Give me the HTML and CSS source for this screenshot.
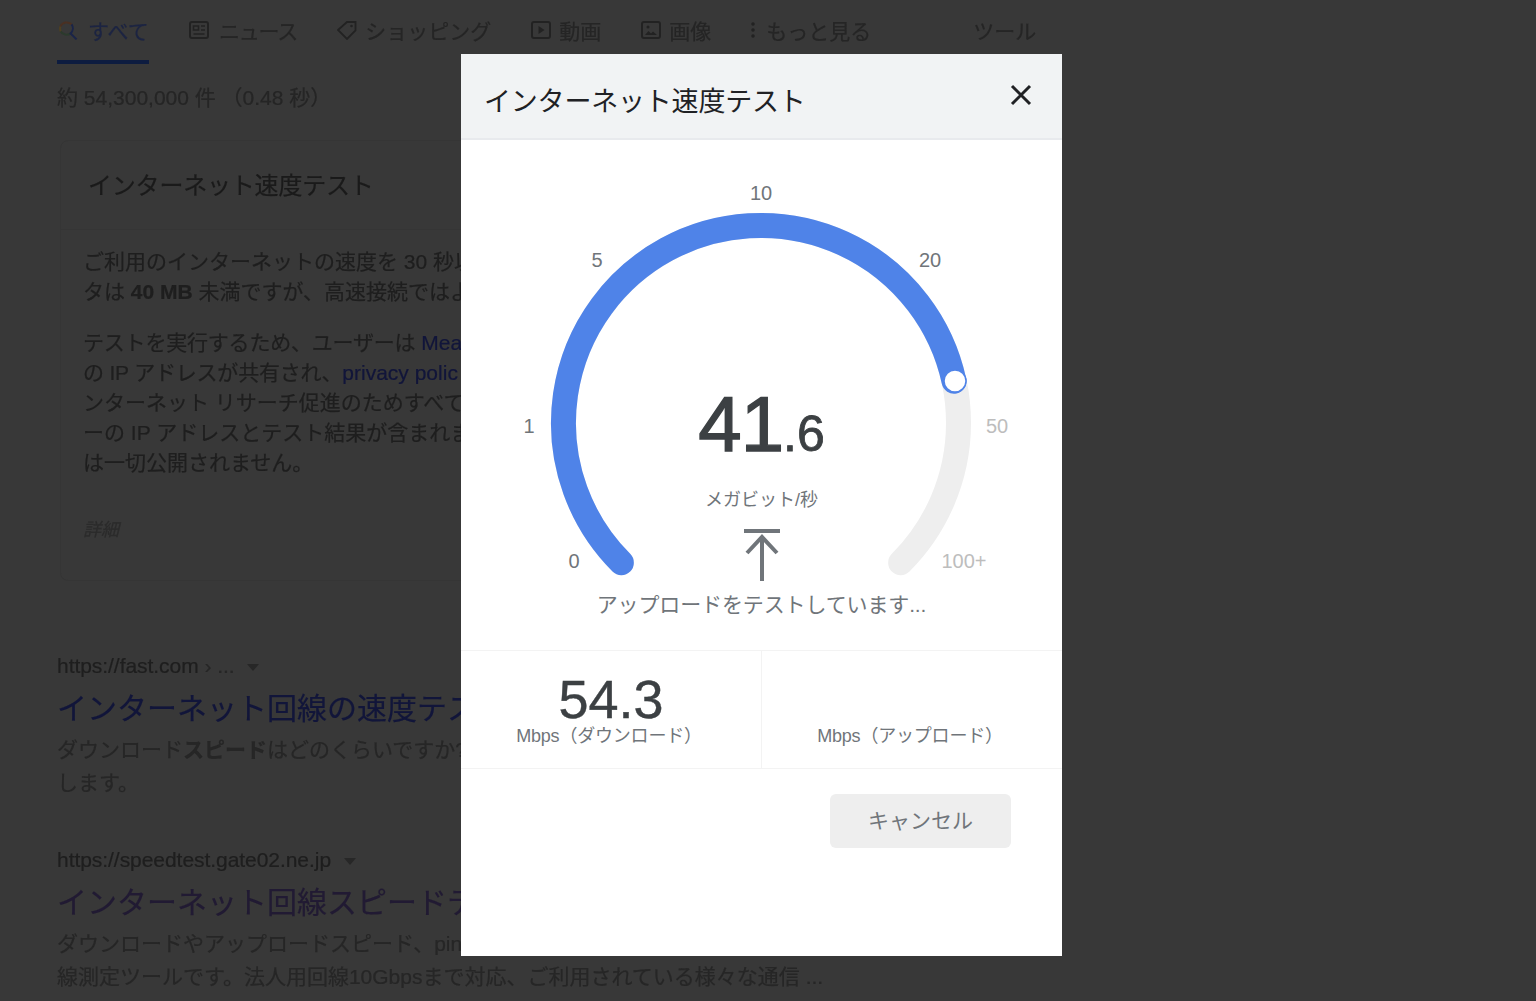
FILE: index.html
```html
<!DOCTYPE html>
<html lang="ja">
<head>
  <meta charset="UTF-8">
  <meta name="viewport" content="width=device-width, initial-scale=1.0">
  <title>インターネット速度テスト</title>
  <link rel="stylesheet" href="styles.css">
</head>
<body>

  <!-- Search results behind the dialog -->
  <div class="page">
    <div class="tabs">
      <div class="tab active">
        <svg class="tab-icon" viewBox="0 0 20 20" fill="none" stroke-width="2">
          <path d="M12.600 13.400a7 7 0 0 1-10-2" stroke="#2b3a2c"/>
          <path d="M2.600 11.400a7 7 0 0 1-.2-5" stroke="#4f4020"/>
          <path d="M2.400 6.400a7 7 0 0 1 11.200-2" stroke="#4a3022"/>
          <path d="M13.600 4.400a7 7 0 0 1-1 9l6 6" stroke="#1a2448"/>
        </svg>
        <span>すべて</span>
      </div>
      <div class="tab tab-news">
        <svg class="tab-icon" viewBox="0 0 20 20" fill="none" stroke="#222" stroke-width="2">
          <rect x="1" y="2" width="18" height="16" rx="2"/>
          <path d="M4.500 6h5v4h-5zM12 6h4M12 10h4M4.500 14h11" stroke-width="1.600"/>
        </svg>
        <span>ニュース</span>
      </div>
      <div class="tab">
        <svg class="tab-icon" viewBox="0 0 20 20" fill="none" stroke="#222" stroke-width="1.800">
          <path d="M1 10 10 2h8.500v8.500L10 19z"/>
          <circle cx="14.500" cy="6" r="1.300" fill="#222" stroke="none"/>
        </svg>
        <span>ショッピング</span>
      </div>
      <div class="tab">
        <svg class="tab-icon" viewBox="0 0 20 20" fill="none" stroke="#222" stroke-width="2">
          <rect x="1" y="2" width="18" height="16" rx="2"/>
          <path d="M7.500 6v8l6-4z" fill="#222" stroke="none"/>
        </svg>
        <span>動画</span>
      </div>
      <div class="tab">
        <svg class="tab-icon" viewBox="0 0 20 20" fill="none" stroke="#222" stroke-width="2">
          <rect x="1" y="2" width="18" height="16" rx="2"/>
          <path d="M4 15l3.500-4 2.500 2.500 2-2 4 3.500z" fill="#222" stroke="none"/>
          <circle cx="7" cy="7" r="1.500" fill="#222" stroke="none"/>
        </svg>
        <span>画像</span>
      </div>
      <div class="tab tab-more">
        <svg class="dots-icon" viewBox="0 0 6 20" fill="#222">
          <circle cx="3" cy="4" r="1.800"/>
          <circle cx="3" cy="10" r="1.800"/>
          <circle cx="3" cy="16" r="1.800"/>
        </svg>
        <span>もっと見る</span>
      </div>
      <div class="tab tab-tools"><span>ツール</span></div>
    </div>

    <div class="result-count">約 54,300,000 件 （0.48 秒）</div>

    <div class="card">
      <div class="card-title">インターネット速度テスト</div>
      <div class="card-body">
        <p>ご利用のインターネットの速度を 30 秒以<br>タは <b>40 MB</b> 未満ですが、高速接続ではよ</p>
        <p><span class="tight">テストを実行するため、ユーザーは</span> <a>Mea</a><br><span class="tight">の IP アドレスが共有され、</span><a>privacy polic</a><br>ンターネット リサーチ促進のためすべて<br>ーの IP アドレスとテスト結果が含まれま<br>は一切公開されません。</p>
        <div class="card-more">詳細</div>
      </div>
    </div>

    <div class="result first">
      <div class="result-url">https://fast.com <span class="crumb">›</span> <span class="crumb">...</span><span class="caret"></span></div>
      <div class="result-title">インターネット回線の速度テス</div>
      <div class="result-text">ダウンロード<b>スピード</b>はどのくらいですか?<br>します。</div>
    </div>

    <div class="result">
      <div class="result-url">https://speedtest.gate02.ne.jp<span class="caret"></span></div>
      <div class="result-title visited">インターネット回線スピードテ</div>
      <div class="result-text">ダウンロードやアップロードスピード、pin<br>線測定ツールです。法人用回線10Gbpsまで対応、ご利用されている様々な通信 ...</div>
    </div>
  </div>

  <!-- Speed test dialog -->
  <div class="dialog">
    <div class="dialog-head">
      <div class="dialog-title">インターネット速度テスト</div>
      <svg class="close-icon" viewBox="0 0 22 22" fill="none" stroke="#202124" stroke-width="3">
        <path d="M2 2l18 18M20 2 2 20"/>
      </svg>
    </div>

    <div class="gauge">
      <svg class="gauge-arc" viewBox="0 0 601 510" fill="none" stroke-width="25" stroke-linecap="round">
        <path d="M160.350 422.650A197.500 197.500 0 1 1 439.650 422.650" stroke="#eeeeee"/>
        <path d="M160.350 422.650A197.500 197.500 0 1 1 493 241.200" stroke="#4f83e8"/>
        <circle cx="494" cy="241" r="11" fill="#fff" stroke="#4f83e8" stroke-width="1.500"/>
      </svg>
      <span class="tick tick-0">0</span>
      <span class="tick tick-1">1</span>
      <span class="tick tick-5">5</span>
      <span class="tick tick-10">10</span>
      <span class="tick tick-20">20</span>
      <span class="tick tick-50 off">50</span>
      <span class="tick tick-100 off">100+</span>

      <div class="speed"><span class="speed-big">41</span><span class="speed-small">.6</span></div>
      <div class="speed-unit">メガビット/秒</div>
      <svg class="upload-icon" viewBox="0 0 36 52" fill="none" stroke="#70757a" stroke-width="4">
        <path d="M0 2h36M18 8v44M3 24 18 8l15 16"/>
      </svg>
      <div class="status">アップロードをテストしています...</div>
    </div>

    <div class="stats">
      <div class="stat">
        <div class="stat-value">54.3</div>
        <div class="stat-label">Mbps（ダウンロード）</div>
      </div>
      <div class="stat">
        <div class="stat-value"></div>
        <div class="stat-label">Mbps（アップロード）</div>
      </div>
    </div>

    <div class="actions">
      <div class="cancel">キャンセル</div>
    </div>
  </div>

</body>
</html>
```

FILE: styles.css
```css
body {
  margin: 0;
  height: 1001px;
  overflow: hidden;
  background: #383838;
  font-family: "Liberation Sans", "Noto Sans CJK JP", sans-serif;
  color: #202020;
}

/* Page behind the dialog */
.page {
  padding-left: 57px;
  white-space: nowrap;
  filter: blur(0.4px);
  -webkit-text-stroke: 0.2px;
}

.tabs {
  display: flex;
  gap: 39px;
  font-size: 21px;
  color: #252525;
}
.tab {
  display: flex;
  align-items: center;
  height: 60px;
  border-bottom: 4px solid transparent;
}
.tab.active {
  width: 92px;
  border-bottom-color: #0d1c40;
  color: #1c2442;
}
.tab-icon {
  width: 20px;
  height: 20px;
  margin-left: 1px;
  margin-right: 8px;
}
.active .tab-icon,
.tab-news .tab-icon {
  margin-right: 10px;
}
.tab-news span {
  letter-spacing: -1.2px;
}
.dots-icon {
  width: 6px;
  height: 20px;
  margin-right: 10px;
}
.tab-tools {
  margin-left: 63px;
}

.result-count {
  margin-top: 19px;
  font-size: 21px;
  line-height: 30px;
  color: #252525;
}

.card {
  box-sizing: border-box;
  width: 420px;
  margin: 27px 0 0 3px;
  border: 1px solid #353535;
  border-radius: 8px;
}
.card-title {
  height: 88px;
  padding-left: 27px;
  font-size: 24px;
  letter-spacing: -0.2px;
  line-height: 90px;
  color: #1a1a1a;
  border-bottom: 1px solid #353535;
}
.card-body {
  padding: 17px 0 35px 22px;
  font-size: 21px;
  line-height: 30px;
  color: #1e1e1e;
}
.card-body p {
  margin: 0 0 21px;
}
.card-body a {
  color: #11153a;
}
.tight {
  letter-spacing: -0.2px;
}
.card-more {
  margin-top: 37px;
  font-size: 18px;
  font-style: italic;
  color: #2b2b2b;
}

.result {
  margin-top: 46px;
}
.result.first {
  margin-top: 70px;
}
.result-url {
  font-size: 21px;
  letter-spacing: -0.05px;
  line-height: 30px;
  color: #1e1e1e;
}
.crumb {
  color: #262626;
}
.caret {
  display: inline-block;
  margin-left: 13px;
  vertical-align: middle;
  border-top: 7px solid #272727;
  border-left: 6px solid transparent;
  border-right: 6px solid transparent;
}
.result-title {
  margin-top: 8px;
  font-size: 30px;
  line-height: 40px;
  color: #11153a;
}
.result-title.visited {
  color: #211a33;
}
.result-text {
  margin-top: 4px;
  font-size: 21px;
  line-height: 33px;
  color: #262626;
}

/* Dialog */
.dialog {
  position: absolute;
  left: 461px;
  top: 54px;
  width: 601px;
  height: 902px;
  background: #fff;
}
.dialog-head {
  display: flex;
  align-items: flex-start;
  justify-content: space-between;
  box-sizing: border-box;
  height: 86px;
  padding: 30px 30px 0 23px;
  background: #f1f3f4;
  border-bottom: 2px solid #e8eaed;
}
.dialog-title {
  margin-top: 2px;
  font-size: 27px;
  letter-spacing: -0.2px;
  line-height: 32px;
  color: #202124;
}
.close-icon {
  width: 22px;
  height: 22px;
}

.gauge {
  position: relative;
  display: flex;
  flex-direction: column;
  align-items: center;
  height: 510px;
  box-sizing: border-box;
  padding-top: 239px;
}
.gauge-arc {
  position: absolute;
  left: 0;
  top: 0;
  width: 601px;
  height: 510px;
}
.tick {
  position: absolute;
  transform: translate(-50%, -50%);
  font-size: 20px;
  color: #70757a;
}
.tick.off {
  color: #bdbdbd;
}
.tick-0 { left: 113px; top: 421px; }
.tick-1 { left: 68px; top: 286px; }
.tick-5 { left: 136px; top: 120px; }
.tick-10 { left: 300px; top: 53px; }
.tick-20 { left: 469px; top: 120px; }
.tick-50 { left: 536px; top: 286px; }
.tick-100 { left: 503px; top: 421px; }

.speed {
  position: relative;
  color: #3c4043;
  line-height: 90px;
  height: 90px;
  -webkit-text-stroke: 1.4px #3c4043;
}
.speed-big {
  font-size: 78px;
  letter-spacing: -1px;
}
.speed-small {
  font-size: 50px;
  -webkit-text-stroke-width: 0.8px;
}
.speed-unit {
  position: relative;
  margin-top: 18px;
  font-size: 18px;
  line-height: 26px;
  color: #70757a;
}
.upload-icon {
  position: relative;
  width: 36px;
  height: 52px;
  margin-top: 16px;
}
.status {
  position: relative;
  margin-top: 9px;
  font-size: 21px;
  letter-spacing: -0.13px;
  line-height: 30px;
  color: #70757a;
}

.stats {
  display: flex;
  height: 119px;
  box-sizing: border-box;
  border-top: 1px solid #f3f3f3;
  border-bottom: 1px solid #f3f3f3;
}
.stat {
  flex: 1;
  display: flex;
  flex-direction: column;
  align-items: center;
  padding-top: 20px;
}
.stat + .stat {
  border-left: 1px solid #f3f3f3;
}
.stat-value {
  height: 56px;
  font-size: 54px;
  line-height: 56px;
  color: #3c4043;
  -webkit-text-stroke: 0.4px #3c4043;
}
.stat-label {
  margin-top: -4px;
  padding-right: 4px;
  font-size: 18px;
  letter-spacing: -0.2px;
  line-height: 26px;
  color: #70757a;
}

.actions {
  display: flex;
  justify-content: flex-end;
  padding: 25px 51px 0 0;
}
.cancel {
  width: 181px;
  height: 54px;
  border-radius: 6px;
  background: #eeeeee;
  font-size: 21px;
  line-height: 54px;
  text-align: center;
  color: #70757a;
}
```
